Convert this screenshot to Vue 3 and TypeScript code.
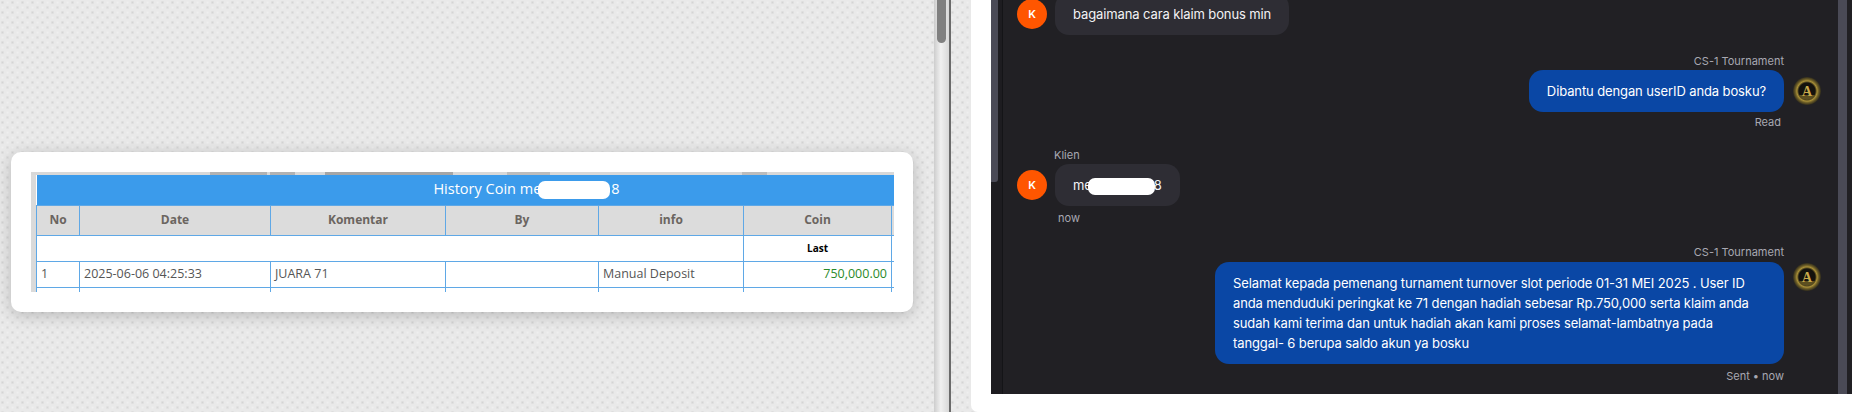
<template>
  <div class="screen">
    <div class="left-pane">
      <div class="card">
        <div class="table-wrap">
          <div class="ghost-strip"></div>
          <table class="coin-table">
            <colgroup>
              <col v-for="w in colWidths" :key="w" :style="{ width: w + 'px' }" />
            </colgroup>
            <thead>
              <tr>
                <th colspan="7" class="title">History Coin me<span class="blot title-blot"></span>8</th>
              </tr>
              <tr class="head">
                <th v-for="h in heads" :key="h">{{ h }}</th>
                <th></th>
              </tr>
            </thead>
            <tbody>
              <tr>
                <td colspan="5"></td>
                <td class="last">Last</td>
                <td></td>
              </tr>
              <tr v-for="row in rows" :key="row.no">
                <td>{{ row.no }}</td>
                <td>{{ row.date }}</td>
                <td>{{ row.comment }}</td>
                <td>{{ row.by }}</td>
                <td>{{ row.info }}</td>
                <td class="coin">{{ row.coin }}</td>
                <td></td>
              </tr>
              <tr>
                <td v-for="n in 7" :key="n">&nbsp;</td>
              </tr>
            </tbody>
          </table>
        </div>
      </div>
    </div>

    <div class="page-scroll"><div class="page-thumb"></div></div>

    <div class="right-pane">
      <div class="chat">
        <div class="rail-left"><div class="rail-thumb"></div></div>

        <div class="chat-list">
          <div class="msg first">
            <div class="msg-row">
              <div class="avatar">K</div>
              <div class="bubble in">bagaimana cara klaim bonus min</div>
            </div>
          </div>

          <div class="msg out m-read">
            <div class="name">CS-1 Tournament</div>
            <div class="msg-row">
              <div class="bubble blue">Dibantu dengan userID anda bosku?</div>
              <svg class="agent" viewBox="0 0 28 28">
                <defs>
                  <radialGradient id="gold-a" cx="50%" cy="50%" r="50%">
                    <stop offset="0" stop-color="#14120d" />
                    <stop offset="0.58" stop-color="#14120d" />
                    <stop offset="0.72" stop-color="#a88f38" />
                    <stop offset="0.84" stop-color="#6b5c26" />
                    <stop offset="1" stop-color="#2f2b1d" />
                  </radialGradient>
                </defs>
                <circle cx="14" cy="14" r="14" fill="url(#gold-a)" />
                <path d="M6 18 A9 9 0 0 0 22 18 Z" fill="#5c4f20" />
                <text x="14" y="19" text-anchor="middle" class="agent-a">A</text>
              </svg>
            </div>
            <div class="meta read">Read</div>
          </div>

          <div class="msg client">
            <div class="name">Klien</div>
            <div class="msg-row">
              <div class="avatar">K</div>
              <div class="bubble in">me<span class="blot chat-blot"></span>8</div>
            </div>
            <div class="meta">now</div>
          </div>

          <div class="msg out m-sent">
            <div class="name">CS-1 Tournament</div>
            <div class="msg-row top">
              <div class="bubble blue wide">
                Selamat kepada pemenang turnament turnover slot periode 01-31 MEI 2025 . User ID anda menduduki peringkat ke 71 dengan hadiah sebesar Rp.750,000 serta klaim anda sudah kami terima dan untuk hadiah akan kami proses selamat-lambatnya pada tanggal- 6 berupa saldo akun ya bosku
              </div>
              <svg class="agent" viewBox="0 0 28 28">
                <circle cx="14" cy="14" r="14" fill="url(#gold-a)" />
                <path d="M6 18 A9 9 0 0 0 22 18 Z" fill="#5c4f20" />
                <text x="14" y="19" text-anchor="middle" class="agent-a">A</text>
              </svg>
            </div>
            <div class="meta">Sent • now</div>
          </div>
        </div>

        <div class="rail-right"><div class="rail-track"></div></div>
      </div>
    </div>
  </div>
</template>

<script setup lang="ts">
const colWidths = [43, 191, 175, 153, 145, 148, 125]
const heads = ['No', 'Date', 'Komentar', 'By', 'info', 'Coin']

const rows = [
  { no: 1, date: '2025-06-06 04:25:33', comment: 'JUARA 71', by: '', info: 'Manual Deposit', coin: '750,000.00' },
]
</script>

<style>
html, body { margin: 0; background: #fff; }
</style>

<style scoped>
.screen {
  display: flex;
  width: 1852px;
  height: 412px;
  overflow: hidden;
  background-color: #e9e9e9;
  background-image:
    radial-gradient(circle at 2.5px 2.5px, #d4d4d4 0, transparent 2px),
    radial-gradient(circle at 7.5px 7.5px, #d8d8d8 0, transparent 2px),
    radial-gradient(circle at 7.5px 2.5px, #efefef 0, transparent 2px),
    radial-gradient(circle at 2.5px 7.5px, #efefef 0, transparent 2px);
  background-size: 10px 10px;
}

.left-pane { width: 934px; flex: none; padding: 152px 21px 0 11px; box-sizing: border-box; }
.card {
  width: 902px;
  height: 160px;
  box-sizing: border-box;
  padding: 20px 19px 20px 20px;
  background: #fff;
  border-radius: 10px;
  box-shadow: 0 3px 16px rgba(0, 0, 0, 0.22);
}
.table-wrap {
  position: relative;
  height: 120px;
  padding: 3px 0 0 5px;
  box-sizing: border-box;
  overflow: hidden;
  background: linear-gradient(#dadada, #dadada) left top / 5px 100% no-repeat;
}
.ghost-strip {
  position: absolute;
  left: 0;
  top: 0;
  width: 100%;
  height: 3px;
  background: linear-gradient(to right,
    #d8d8d8 179px, #b2b2b2 179px, #b2b2b2 236px, #d8d8d8 236px,
    #d8d8d8 239px, #b2b2b2 239px, #b2b2b2 264px, #d8d8d8 264px,
    #d8d8d8 294px, #a6a6a6 294px, #a6a6a6 422px, #d8d8d8 422px,
    #d8d8d8 476px, #bcbcbc 476px, #bcbcbc 519px, #d8d8d8 519px,
    #d8d8d8 711px, #bcbcbc 711px, #bcbcbc 736px, #d8d8d8 736px);
}
.coin-table {
  width: 980px;
  table-layout: fixed;
  border-collapse: collapse;
  font-family: "Open Sans", "Noto Sans", sans-serif;
  font-size: 12.5px;
  color: #555;
}
.coin-table th, .coin-table td { border: 1px solid #5fa8e6; padding: 0 4px; height: 25px; line-height: 16px; box-sizing: border-box; }
.coin-table tbody td { height: 26px; }
.title {
  height: 30px !important;
  background: #3b9beb;
  color: #fff;
  font-weight: 400;
  font-size: 14.5px;
  border: 0 !important;
}
.head th { height: 30px; background: #dcdcdc; color: #6b6560; font-weight: 700; font-size: 12px; }
.blot { display: inline-block; background: #fff; vertical-align: middle; }
.title-blot { width: 72px; height: 18px; border-radius: 7px; margin-left: -3px; margin-right: 1px; }
.chat-blot { width: 67px; height: 17px; border-radius: 7px; margin-left: -4px; margin-right: -1px; }
.last { text-align: center; font-size: 10px; font-weight: 700; color: #000; }
.coin { text-align: right; color: #2a8a2a; }

.page-scroll {
  width: 17px;
  flex: none;
  margin-right: 20px;
  border-right: 2px solid #6a6a6a;
  box-sizing: border-box;
  background: linear-gradient(to right, #cdcdcd, #f0f0f0 45%, #d8d8d8);
}
.page-thumb { width: 9px; height: 43px; margin-left: 3px; background: #808080; border-radius: 0 0 5px 5px; }

.right-pane { flex: 1; background: #fff; padding-left: 20px; border-bottom-left-radius: 7px; }
.chat { display: flex; height: 394px; overflow: hidden; background: #212024; font-family: Inter, "Noto Sans", sans-serif; }
.rail-left { width: 11px; flex: none; border-right: 1px solid #141417; background: #1d1c20; }
.rail-thumb { width: 7px; height: 182px; background: #4a4a56; border-radius: 0 0 3px 0; }
.rail-right { width: 14px; flex: none; }
.rail-track { width: 9px; height: 100%; background: #4a4a56; }

.chat-list { flex: 1; display: flex; flex-direction: column; padding: 0 17px 0 14px; }
.msg { display: flex; flex-direction: column; }
.first { margin-top: -7px; }
.m-read { margin-top: 18px; }
.client { margin-top: 17px; }
.m-sent { margin-top: 18px; }
.msg-row { display: flex; align-items: center; gap: 8px; }
.msg-row.top { align-items: flex-start; }
.out { align-items: flex-end; }
.out .msg-row { gap: 9px; }
.avatar {
  width: 30px;
  height: 30px;
  flex: none;
  border-radius: 50%;
  background: #ff5600;
  color: #fff;
  font-size: 11px;
  font-weight: 600;
  display: flex;
  align-items: center;
  justify-content: center;
}
.bubble {
  box-sizing: border-box;
  padding: 11px 18px;
  font-size: 13px;
  line-height: 20px;
  letter-spacing: -0.11px;
  border-radius: 14px;
  color: #f2f2f5;
}
.bubble.in { background: #2e2d34; }
.bubble.blue { background: #0a47a5; color: #fff; }
.bubble.wide { width: 569px; }
.name { font-size: 11px; line-height: 16px; color: #a8a8b2; margin-bottom: 1px; }
.out .name { margin-right: 37px; }
.client .name { margin-left: 37px; }
.meta { font-size: 11px; line-height: 16px; color: #a8a8b2; margin-top: 4px; }
.client .meta { margin-left: 41px; }
.out .meta { margin-right: 37px; }
.out .meta.read { margin-right: 40px; margin-top: 2px; }
.m-sent .name { margin-bottom: 2px; }
.agent { width: 28px; height: 28px; flex: none; }
.m-sent .agent { margin-top: 1px; }
.agent-a { font-family: "Liberation Serif", serif; font-size: 14px; font-weight: 700; fill: #c9a94a; }
</style>
